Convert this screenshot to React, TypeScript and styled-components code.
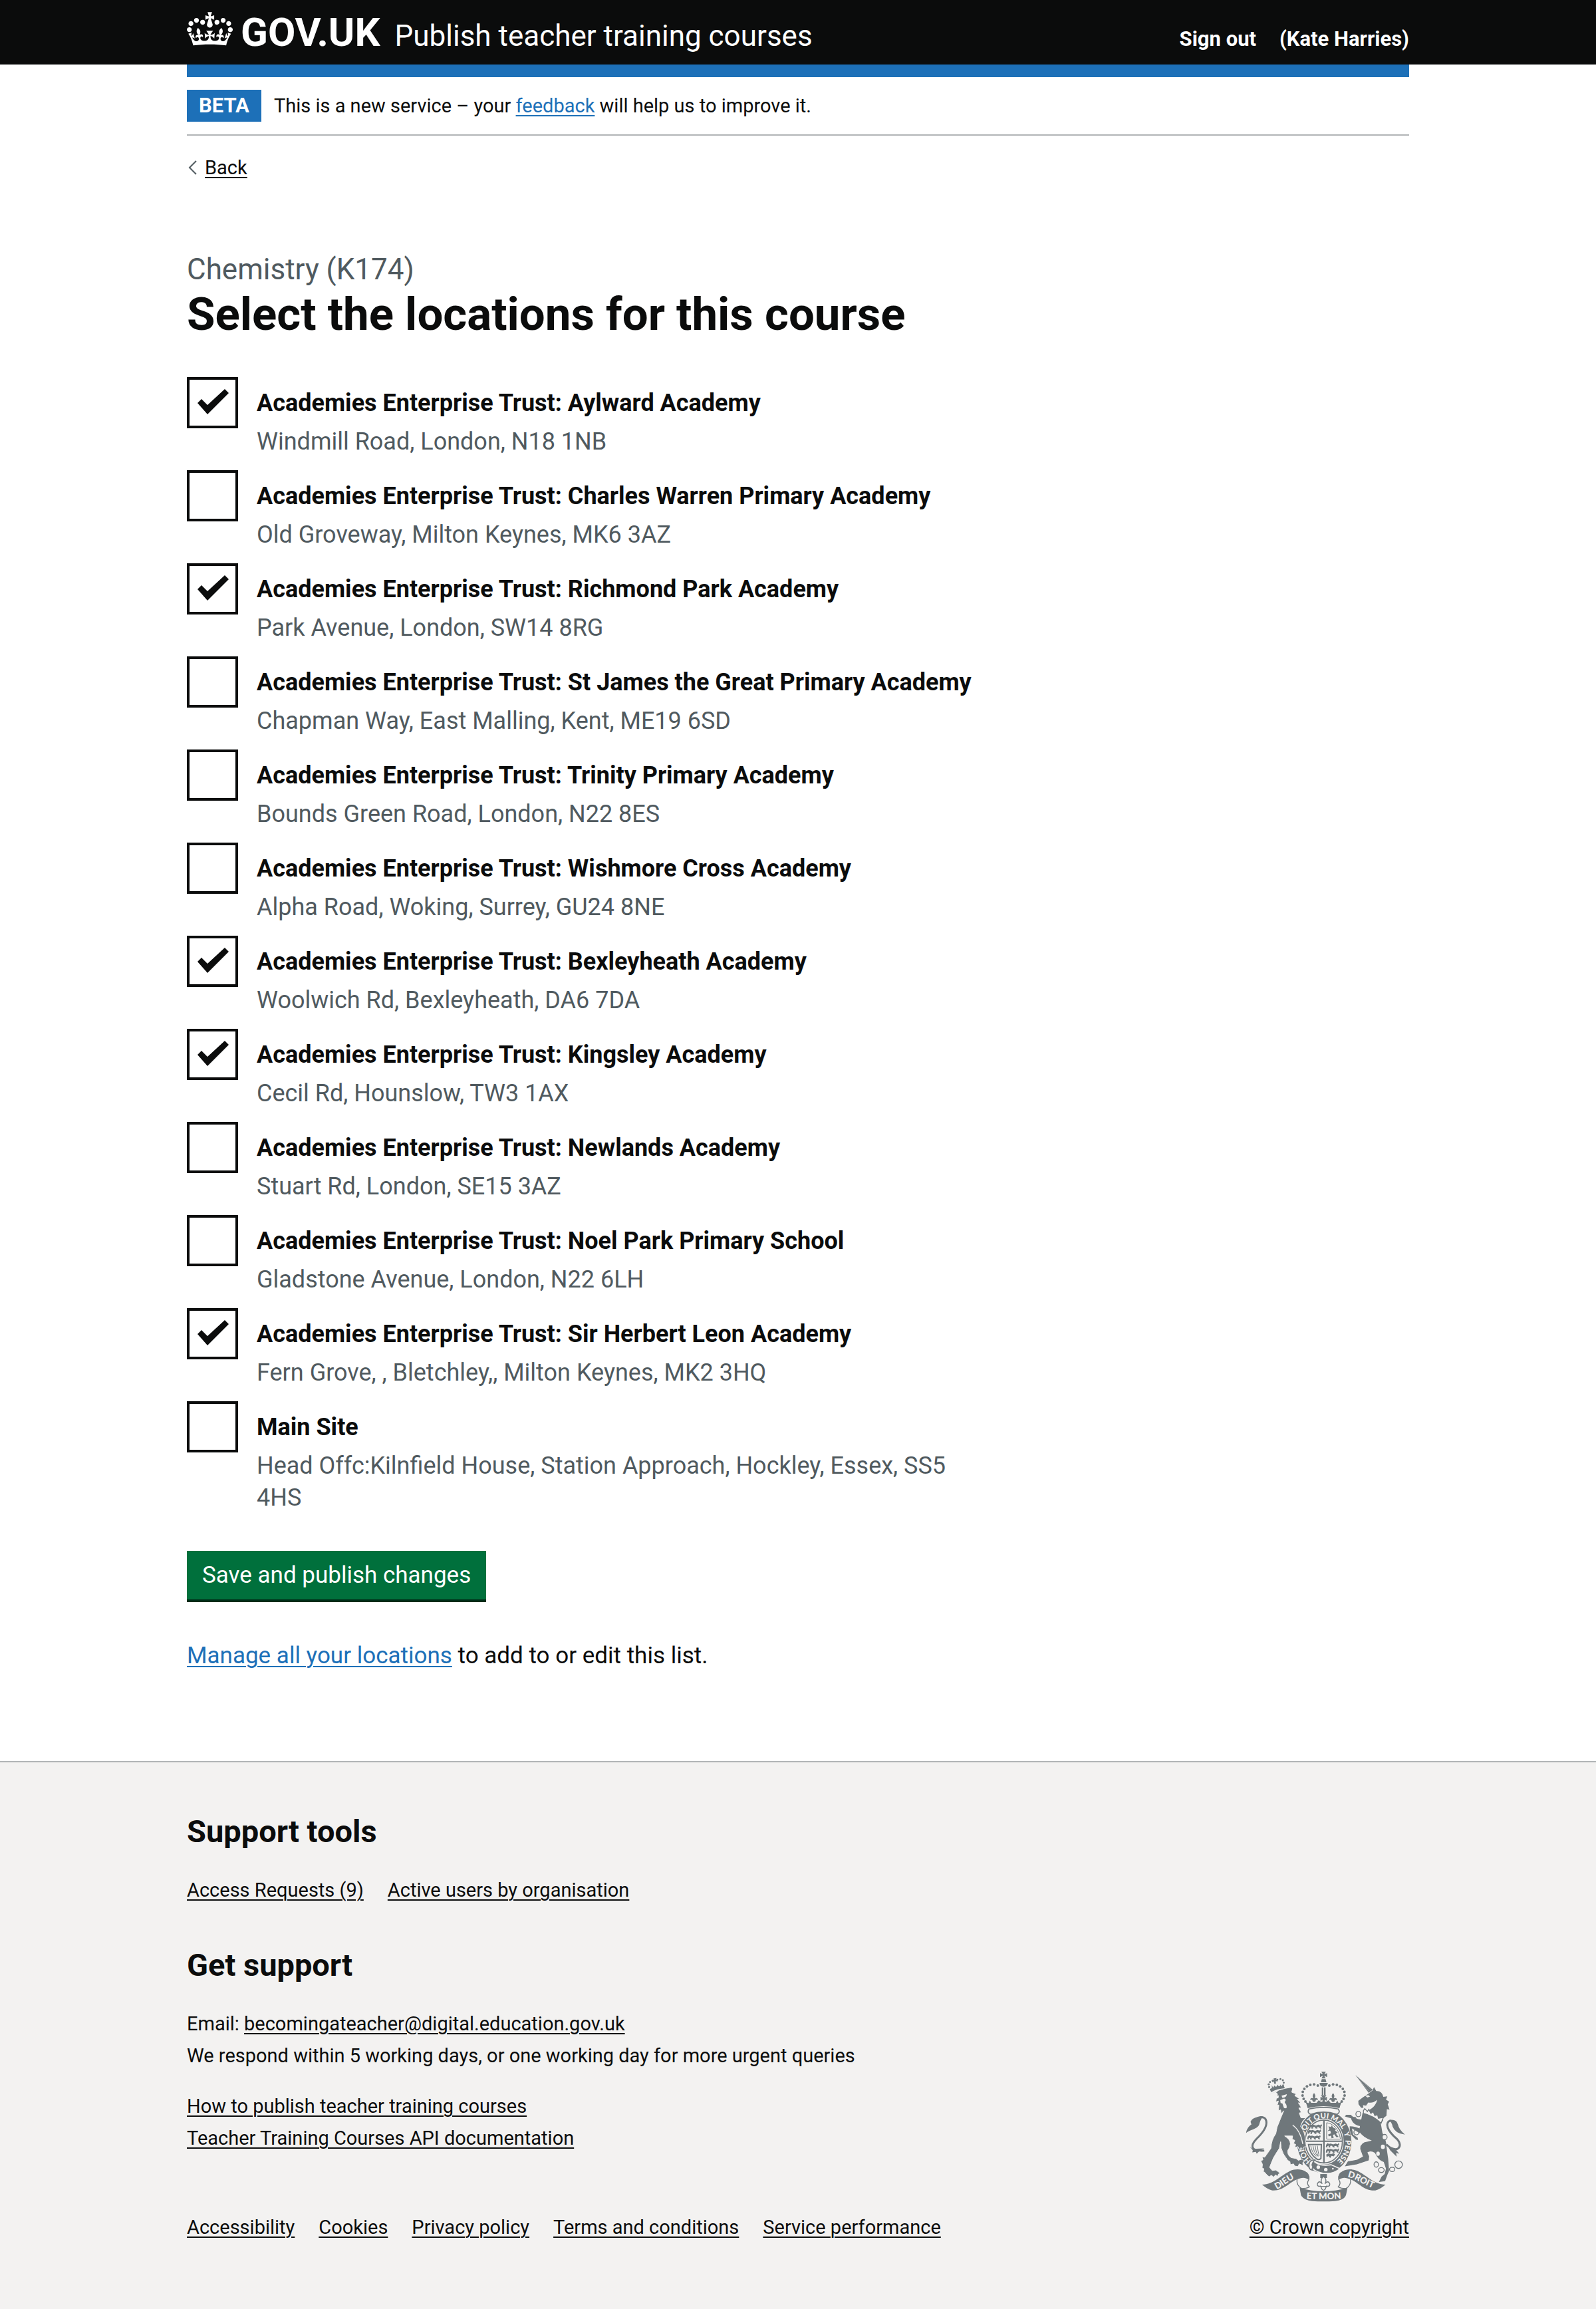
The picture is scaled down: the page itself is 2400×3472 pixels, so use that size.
import React from 'react';
import styled, { createGlobalStyle } from 'styled-components';

const colours = {
  ink: '#0b0c0c',
  blue: '#1d70b8',
  grey: '#505a5f',
  line: '#b1b4b6',
  footer: '#f3f2f1',
  green: '#00703c',
  greenShadow: '#002d18',
  crest: '#6f777b',
};

const GlobalStyle = createGlobalStyle`
  *, *::before, *::after { box-sizing: border-box; }
  body {
    margin: 0;
    background: ${colours.footer};
    color: ${colours.ink};
    font-family: Roboto, "Liberation Sans", Arial, sans-serif;
  }
`;

const Page = styled.div`
  background: #fff;
`;

const Container = styled.div`
  max-width: 1838px;
  margin: 0 auto;
`;

const HeaderBar = styled.header`
  background: ${colours.ink};
  color: #fff;
  padding: 18px 0 14px;
`;

const HeaderRow = styled(Container)`
  display: flex;
  justify-content: space-between;
  align-items: baseline;
`;

const Brand = styled.div`
  display: flex;
  align-items: baseline;
  gap: 22px;
`;

const LogoLink = styled.a`
  display: flex;
  align-items: baseline;
  gap: 12px;
  color: inherit;
  text-decoration: none;
  font-size: 60px;
  line-height: 60px;
  font-weight: 700;
`;

const Crown = styled.svg`
  width: 69px;
  height: 51px;
  margin-bottom: -3px;
`;

const ServiceLink = styled.a`
  color: inherit;
  text-decoration: none;
  font-size: 44px;
  line-height: 58px;
`;

const HeaderNav = styled.nav`
  display: flex;
  gap: 35px;
  font-size: 31px;
  line-height: 38px;
  font-weight: 700;

  a {
    color: inherit;
    text-decoration: none;
  }
`;

const BlueBar = styled.div`
  height: 19px;
  background: ${colours.blue};
`;

const PhaseBanner = styled.div`
  display: flex;
  align-items: center;
  gap: 19px;
  padding: 19px 0;
  border-bottom: 2px solid ${colours.line};
  font-size: 29px;
  line-height: 48px;
`;

const Tag = styled.strong`
  padding: 0 18px;
  background: ${colours.blue};
  color: #fff;
  font-size: 31px;
  line-height: 48px;
`;

const TextLink = styled.a<{ $tone?: 'blue' | 'ink' }>`
  color: ${({ $tone }) => ($tone === 'blue' ? colours.blue : colours.ink)};
  text-decoration: underline;
  text-decoration-thickness: 2px;
  text-underline-offset: 4px;
`;

const BackRow = styled.nav`
  display: flex;
  align-items: center;
  gap: 12px;
  margin-top: 29px;
  font-size: 29px;
  line-height: 38px;
`;

const Chevron = styled.svg`
  width: 15px;
  height: 22px;
`;

const Main = styled.main`
  max-width: 1206px;
  padding: 105px 0 134px;
`;

const Title = styled.h1`
  margin: 0 0 56px;
  font-size: 69px;
  line-height: 77px;
  font-weight: 700;
`;

const Caption = styled.span`
  display: block;
  color: ${colours.grey};
  font-size: 44px;
  line-height: 58px;
  font-weight: 400;
`;

const LocationList = styled.div`
  display: flex;
  flex-direction: column;
  gap: 19px;
  margin-bottom: 56px;
`;

const LocationRow = styled.div`
  display: flex;
  align-items: flex-start;
  gap: 28px;
`;

const Checkbox = styled.input`
  appearance: none;
  flex: none;
  width: 77px;
  height: 77px;
  margin: 0;
  border: 4px solid ${colours.ink};
  background: #fff;

  &:checked::after {
    content: '';
    display: block;
    width: 100%;
    height: 100%;
    background: ${colours.ink};
    clip-path: polygon(12px 35px, 18px 29px, 27px 38px, 53px 14px, 59px 20px, 27px 52px);
  }
`;

const LocationText = styled.div`
  display: flex;
  flex-direction: column;
  gap: 10px;
  padding-top: 15px;
  line-height: 48px;
`;

const LocationLabel = styled.label`
  font-size: 36px;
  font-weight: 700;
`;

const Hint = styled.span`
  padding-right: 29px;
  color: ${colours.grey};
  font-size: 36px;
`;

const SaveButton = styled.button`
  display: block;
  margin: 0 0 61px;
  padding: 13px 23px 12px;
  border: 0;
  background: ${colours.green};
  box-shadow: 0 4px 0 ${colours.greenShadow};
  color: #fff;
  font-family: inherit;
  font-size: 35px;
  line-height: 48px;
`;

const Paragraph = styled.p`
  margin: 0;
  font-size: 35px;
  line-height: 48px;
`;

const FooterBar = styled.footer`
  border-top: 2px solid ${colours.line};
  background: ${colours.footer};
  padding: 75px 0 100px;
  font-size: 29px;
  line-height: 48px;
`;

const FooterRow = styled(Container)`
  display: flex;
  justify-content: space-between;
  align-items: flex-end;
`;

const FooterHeading = styled.h2`
  margin: 0 0 35px;
  font-size: 47px;
  line-height: 58px;
  font-weight: 700;
`;

const FooterBlock = styled.div<{ $after?: number }>`
  margin-bottom: ${({ $after = 0 }) => $after}px;
`;

const InlineLinks = styled.ul<{ $after?: number }>`
  display: flex;
  flex-wrap: wrap;
  gap: 0 36px;
  margin: 0 0 ${({ $after = 0 }) => $after}px;
  padding: 0;
  list-style: none;
`;

const CrestLink = styled.a`
  display: flex;
  flex-direction: column;
  align-items: flex-end;
  gap: 14px;
  color: ${colours.ink};
  text-decoration: underline;
  text-decoration-thickness: 2px;
  text-underline-offset: 4px;
`;

const CrestSvg = styled.svg`
  width: 241px;
  height: 197px;
  margin-right: 5px;
`;

type Location = { name: string; address: string; selected?: boolean };

const trust = 'Academies Enterprise Trust: ';

const locations: Location[] = [
  { name: trust + 'Aylward Academy', address: 'Windmill Road, London, N18 1NB', selected: true },
  { name: trust + 'Charles Warren Primary Academy', address: 'Old Groveway, Milton Keynes, MK6 3AZ' },
  { name: trust + 'Richmond Park Academy', address: 'Park Avenue, London, SW14 8RG', selected: true },
  { name: trust + 'St James the Great Primary Academy', address: 'Chapman Way, East Malling, Kent, ME19 6SD' },
  { name: trust + 'Trinity Primary Academy', address: 'Bounds Green Road, London, N22 8ES' },
  { name: trust + 'Wishmore Cross Academy', address: 'Alpha Road, Woking, Surrey, GU24 8NE' },
  { name: trust + 'Bexleyheath Academy', address: 'Woolwich Rd, Bexleyheath, DA6 7DA', selected: true },
  { name: trust + 'Kingsley Academy', address: 'Cecil Rd, Hounslow, TW3 1AX', selected: true },
  { name: trust + 'Newlands Academy', address: 'Stuart Rd, London, SE15 3AZ' },
  { name: trust + 'Noel Park Primary School', address: 'Gladstone Avenue, London, N22 6LH' },
  { name: trust + 'Sir Herbert Leon Academy', address: 'Fern Grove, , Bletchley,, Milton Keynes, MK2 3HQ', selected: true },
  { name: 'Main Site', address: 'Head Offc:Kilnfield House, Station Approach, Hockley, Essex, SS5 4HS' },
];

const policyLinks = ['Accessibility', 'Cookies', 'Privacy policy', 'Terms and conditions', 'Service performance'];

const CrownLogo = () => (
  <Crown viewBox="0 0 132 97" aria-hidden="true">
    <path
      fill="currentColor"
      fillRule="evenodd"
      d="M25 30.2c3.5 1.5 7.7-.2 9.1-3.7 1.5-3.6-.2-7.8-3.9-9.2-3.6-1.4-7.6.3-9.1 3.9-1.4 3.5.3 7.5 3.9 9zM9 39.5c3.6 1.5 7.8-.2 9.2-3.7 1.5-3.6-.2-7.8-3.9-9.1-3.6-1.5-7.6.2-9.1 3.8-1.4 3.5.3 7.5 3.8 9zM4.4 57.2c3.5 1.5 7.7-.2 9.1-3.8 1.5-3.6-.2-7.7-3.9-9.1-3.5-1.5-7.6.3-9.1 3.8-1.4 3.5.3 7.6 3.9 9.1zm38.3-21.4c3.5 1.5 7.7-.2 9.1-3.8 1.5-3.6-.2-7.7-3.9-9.1-3.6-1.5-7.6.3-9.1 3.8-1.3 3.6.4 7.7 3.9 9.1zm64.4-5.6c-3.6 1.5-7.8-.2-9.1-3.7-1.5-3.6.2-7.8 3.8-9.2 3.6-1.4 7.7.3 9.2 3.9 1.3 3.5-.4 7.5-3.9 9zm15.9 9.3c-3.6 1.5-7.7-.2-9.1-3.7-1.5-3.6.2-7.8 3.7-9.1 3.6-1.5 7.7.2 9.2 3.8 1.5 3.5-.3 7.5-3.8 9zm4.7 17.7c-3.6 1.5-7.8-.2-9.2-3.8-1.5-3.6.2-7.7 3.9-9.1 3.6-1.5 7.7.3 9.2 3.8 1.3 3.5-.4 7.6-3.9 9.1zM89.3 35.8c-3.6 1.5-7.8-.2-9.2-3.8-1.4-3.6.2-7.7 3.9-9.1 3.6-1.5 7.7.3 9.2 3.8 1.4 3.6-.3 7.7-3.9 9.1zM69.7 17.7l8.9 4.7V9.3l-8.9 2.8c-.2-.3-.5-.6-.9-.9L72.4 0H59.6l3.5 11.2c-.3.3-.6.5-.9.9l-8.8-2.8v13.1l8.8-4.7c.3.3.6.7.9.9l-5 15.4v.1c-.2.8-.4 1.6-.4 2.4 0 4.1 3.1 7.5 7 8.1h.2c.3 0 .7.1 1 .1.4 0 .7 0 1-.1h.2c4-.6 7.1-4.1 7.1-8.1 0-.8-.1-1.7-.4-2.4V34l-5.1-15.4c.4-.2.7-.6 1-.9zM66 92.8c16.9 0 32.8 1.1 47.1 3.2 4-16.9 8.9-26.7 14-33.5l-9.6-3.4c1 4.9 1.1 7.2 0 10.2-1.5-1.4-3-4.3-4.2-8.7L108.6 76c2.8-2 5-3.2 7.5-3.3-4.4 9.4-10 11.9-13.6 11.2-4.3-.8-6.3-4.6-5.6-7.9 1-4.7 5.7-5.9 8-.5 4.3-8.7-3-11.4-7.6-8.8 7.1-7.2 7.9-13.5 2.1-21.1-8 6.1-8.1 12.3-4.5 20.8-4.7-5.4-12.1-2.5-9.5 6.2 3.4-5.2 7.9-2 7.2 3.1-.6 4.3-6.4 7.8-13.5 7.2-10.3-.9-10.9-8-11.2-13.8 2.5-.5 7.1 1.8 11 7.3L80.2 60c-4.1 4.4-8 5.3-12.3 5.4 1.4-4.4 8-11.6 8-11.6H55.5s6.4 7.2 7.9 11.6c-4.2-.1-8-1-12.3-5.4l1.4 16.4c3.9-5.5 8.5-7.7 10.9-7.3-.3 5.8-.9 12.8-11.1 13.8-7.2.6-12.9-2.9-13.5-7.2-.7-5 3.8-8.3 7.1-3.1 2.7-8.7-4.6-11.6-9.4-6.2 3.7-8.5 3.6-14.7-4.6-20.8-5.8 7.6-5 13.9 2.2 21.1-4.7-2.6-11.9.1-7.7 8.8 2.3-5.5 7.1-4.2 8.1.5.7 3.3-1.3 7.1-5.7 7.9-3.5.7-9-1.8-13.5-11.2 2.5.1 4.7 1.3 7.5 3.3l-4.7-15.4c-1.2 4.4-2.7 7.2-4.3 8.7-1.1-3-.9-5.3 0-10.2l-9.5 3.4c5 6.9 9.9 16.7 14 33.5 14.8-2.1 30.8-3.2 47.7-3.2z"
    />
  </Crown>
);

/* Beads down the left arch of the central crown; the right arch mirrors them about x = 452. */
const archBeads = [
  [426, 134], [409, 129], [392, 131], [377, 138], [365, 149], [358, 163], [357, 179], [362, 194], [370, 206],
];

const lionBeads = [
  [222, 112], [210, 118], [204, 129], [206, 141], [243, 108], [257, 105], [268, 110], [272, 121], [269, 133],
];

/* One walking lion, repeated three to a quarter on the shield. */
const WalkingLion = ({ x, y }: { x: number; y: number }) => (
  <path
    transform={`translate(${x} ${y})`}
    d="M2 8 L8 2 L15 5 L22 3 L34 7 L44 3 L54 6 L58 0 L61 9 L55 13 L59 20 L52 20 L47 14 L38 15 L40 21 L32 20 L28 13 L20 14 L20 21 L12 20 L14 12 L6 16 L8 21 L0 19 Z"
  />
);

const Crest = () => {
  const fg = colours.crest;
  const bg = colours.footer;
  return (
    <CrestSvg viewBox="100 68 723 592" fill={fg} aria-hidden="true">
      <defs>
        <path id="garter" d="M455 496 A96 107 0 0 1 455 282 A96 107 0 0 1 455 496" />
        <path id="dieu" d="M240 604 C276 588 296 560 344 546" />
        <path id="droit" d="M560 548 C600 554 630 584 690 604" />
        <path id="etmon" d="M360 645 Q452 652 546 644" />
      </defs>

      {/* Garter and shield */}
      <ellipse cx="455" cy="388" rx="123" ry="142" />
      <g fill={bg} fontFamily="Lato, Roboto, sans-serif" fontWeight="900" fontSize="34" textAnchor="middle">
        <text><textPath href="#garter" startOffset="17%">HONI</textPath></text>
        <text><textPath href="#garter" startOffset="36%">SOIT</textPath></text>
        <text><textPath href="#garter" startOffset="48%">QUI</textPath></text>
        <text><textPath href="#garter" startOffset="60%">MAL</textPath></text>
        <text><textPath href="#garter" startOffset="70%">Y</textPath></text>
        <text><textPath href="#garter" startOffset="82%">PENSE</textPath></text>
      </g>
      <ellipse cx="453" cy="387" rx="90" ry="104" fill={bg} />
      <ellipse cx="453" cy="387" rx="84" ry="97" fill="none" stroke={fg} strokeWidth="5" />
      <path d="M450 290h7v194h-7zM369 383h168v6H369z" />
      <WalkingLion x={384} y={308} />
      <WalkingLion x={380} y={332} />
      <WalkingLion x={378} y={357} />
      <g transform="translate(84 84)">
        <WalkingLion x={378} y={309} />
        <WalkingLion x={378} y={333} />
        <path d="M380 362l10-5 12 3 12-4 6 6-6 8-10-2-6 10-8-9-8 4z" />
      </g>
      <path d="M466 302c30 4 56 30 62 74h-62z" fill="none" stroke={fg} strokeWidth="3" />
      <path d="M474 318l12 4 2-8 8 10 12 6-4 8 12 8-8 6 12 14-10 2-10-14-6 4 4 12-10 2-2-12-10 4-4-8 14-6-4-12-12 2 8-8z" />
      <path d="M384 401h58l-2 62q-10 10-20 2-30-20-36-64z" fill="none" stroke={fg} strokeWidth="6" />
      <path d="M394 406q4 28 24 48M404 406q2 26 20 48M414 406q2 26 14 48M424 406q2 24 8 46" fill="none" stroke={fg} strokeWidth="3" />

      {/* Buckle and strap end */}
      <path d="M386 490q6-26 26-22-8 8 4 14 26 18 70 10l40 18q-30 26-78 20-40-6-62-40z" stroke={bg} strokeWidth="5" />
      <path d="M412 470q-24-2-26 22t16 24q-4-10 4-14-14-8 6-32z" fill={bg} stroke={fg} strokeWidth="5" />
      <circle cx="428" cy="503" r="8" fill={bg} />
      <circle cx="462" cy="514" r="8" fill={bg} />
      <circle cx="494" cy="510" r="4" fill={bg} />

      {/* Central crown */}
      <path d="M378 228q74-24 148 0l-6 24q-68-16-136 0z" fill={bg} />
      <path d="M442 72h20l-7 12 13-6v18l-13-6 6 12h-18l6-12-13 6v-18l13 6z" />
      <path d="M444 105h17l4 14h-25z" />
      <path d="M434 122h37q0 17-19 17t-18-17z" />
      <path d="M444 142h7v36h-7zM454 142h7v36h-7z" />
      {archBeads.map(([x, y]) => (
        <React.Fragment key={x}>
          <circle cx={x} cy={y} r="6" />
          <circle cx={904 - x} cy={y} r="6" />
        </React.Fragment>
      ))}
      <path d="M440 178h25l-8 11 10-4v18l-10-5 2 12h-13l2-12-10 5v-18l10 4z" />
      <path d="M409 168q10 12 3 24 14-6 14 8l-8-2-4 10h-10l-4-10-8 2q0-14 14-8-8-12 3-24zM495 168q10 12 3 24 14-6 14 8l-8-2-4 10h-10l-4-10-8 2q0-14 14-8-8-12 3-24z" />
      <path d="M370 208l14 6 6-12 6 10h24l10-12 10 8h24l10-8 10 12h24l6-10 6 12 14-6q-6 10-10 28-72-18-144 0-4-18-10-28z" />
      <path d="M386 240q-10 18 8 24 58-20 118 0 18-8 6-24-66-14-132 0z" fill={bg} stroke={fg} strokeWidth="5" />

      {/* Lion */}
      <path
        stroke={bg}
        strokeWidth="3"
        d="M196 181l18-9q34-22 92-30l6 6-4 16 20 8-6 8 22 14-10 2 16 18-12-2 14 22-12 2 12 20-10 2 8 22 22 0q-18 14-24 38 20 26 22 62l4 30-12 2-2 12-10-10-8 10-6-14-14 4 4-14-10-4 6-14-12-6 2-14-36 0q26 16 26 36-4 20-12 30-2 22 16 32l22 4 10 8 18-6 8 12-6 4 2 14-18-8-6 12-14-2-6-10-14 4-2-14-10-6q-24-30-30-56l-2-28-6 30q-30 40-44 86l12 14 16-2 12 8 8 8-8 2-2 10-12-6-6 10-12-8-10 6-10-8-10-12-6-2 2-14-8-4 2-16-8-16 10-4-4-14 12 2 10-14 18-26q2-40 22-66l6-30q16-40 30-74l-12 14-2-18-10 4 2-26-8 2 6-20-12 4 4-22 4-14-8-6 8-6z"
      />
      <path d="M226 180l24-1-2 12q-14 4-22-11zM262 180l24-7q0 14-20 17zM256 200l18-7 8 6-6 10 8 12 2 12q-8 8-14 0l-6-18-8-2z" fill={bg} />
      <path d="M312 312q36 26 46 86" fill="none" stroke={bg} strokeWidth="4" />
      <path d="M209 150q32-16 64-13l4 9q-34 2-62 18z" />
      {lionBeads.map(([x, y]) => (
        <circle key={x} cx={x} cy={y} r="4.5" />
      ))}
      <path d="M226 102l14-2-4 8 8 0 0 8-8-2 1 12-8 0-2-10-7 2-1-8 8-1zM218 132l6 12 6-10 8 8 6-12 7 9 8-10 2 14-42 9z" />
      <path d="M184 428c-62 4-64-22-36-52 36-34 54-66 42-90-10-14-32-12-50 4" fill="none" stroke={fg} strokeWidth="9" />
      <path d="M178 274c-30 2-48 6-56 24l4 12c-12 8-22 22-24 38 18-14 46-16 58-34 4-10 4-22 18-40zM118 410l14 10 52-2-22 12-12 12-4-8-16 2 2-10z" />

      {/* Unicorn */}
      <path d="M596 87l78 66-18 14z" />
      <path d="M604 98l54 62M612 100l54 52" stroke={bg} strokeWidth="1" />
      <path d="M680 141l10 18q26-2 32 26l18-2-6 14 14 10-6 12 8 24-12-2-2 30-14 10-2 16q-26-32-68-36l-10-10q44-14 52-52-18 16-40 12l-10 14-14-2 2 12-10 0-12-16-1-16q20-16 42-30l22-16z" />
      <path d="M640 180l14-2 8 6-12 4z" fill={bg} />
      <path d="M632 248l6-10 12 14 6-10 10 18 10-8 8 18 12-4 4 16 22-4-10 26q-36-34-80-44z" fill={bg} stroke={fg} strokeWidth="4" />
      <path d="M628 258q46 10 82 44l8 46q18 30 18 62l8 56 4 54-8 18-10 28-28 4 12-24 14-12 6-24-10-30q-26-10-40-42-20-12-34-2l8 18-2 18-54 18-54 9 14-22 42-8 26-14-12-34q-2-30 34-34l18-4q-40-14-58-42z" />
      <path d="M620 318q-36-4-44-36l-28-8 6-8 22 0q14 20 48 22zM616 350l-36-22 6 28 20 14 2 10-10-2-14-14q-14-10-14-46 20 0 52 12z" />
      <path d="M736 400c46 46 80 10 48-24-46-38-58-76-28-84" fill="none" stroke={fg} strokeWidth="9" />
      <path d="M748 290q34-6 40 20 4 22 32 46-44-4-56-36-2-18-16-30zM742 408l12 20 28 28-2-18 14 4-20-24z" />
      <g fill="none" stroke={fg} strokeWidth="4">
        <ellipse cx="609" cy="263" rx="11" ry="12" />
        <ellipse cx="591" cy="287" rx="8" ry="10" />
        <ellipse cx="600" cy="345" rx="11" ry="12" />
        <ellipse cx="690" cy="491" rx="10" ry="12" />
        <ellipse cx="713" cy="516" rx="13" ry="11" />
        <circle cx="791" cy="492" r="17" />
        <ellipse cx="762" cy="513" rx="12" ry="10" />
        <ellipse cx="728" cy="367" rx="11" ry="12" fill={bg} />
      </g>
      <ellipse cx="720" cy="411" rx="9" ry="10" fill={bg} />
      <ellipse cx="698" cy="442" rx="8" ry="10" fill={bg} />

      {/* Fleur-de-lis pendant */}
      <path d="M437 534h30v18h-30z" />
      <path d="M452 544q18 16 6 34 14-18 22 0 2 14-14 10-6 12-6 14l-8 6-8-6q0-2-6-14-16 4-14-10 8-18 22 0-12-18 6-34zM434 590h36" fill={bg} stroke={fg} strokeWidth="4" />

      {/* Motto ribbon */}
      <path d="M332 556q-4 30 22 44 20 0 34-8-16-16-2-34 4-26-22-36z" fill={bg} stroke={fg} strokeWidth="4" />
      <path d="M574 556q4 30-22 44-20 0-34-8 16-16 2-34-4-26 22-36z" fill={bg} stroke={fg} strokeWidth="4" />
      <path d="M174 582c56-4 76-36 126-62 34-14 78-8 86 26l-2 14c-18-14-34-8-52-2-36 14-62 54-112 50-18-4-32-14-46-26z" />
      <path d="M732 582c-56-4-76-36-126-62-34-14-78-8-86 26l2 14c18-14 34-8 52-2 36 14 62 54 112 50 18-4 32-14 46-26z" />
      <path d="M344 596q108 32 216 0l-6 30q-6 26-50 30-52 4-104 0-38-4-50-26z" />
      <g fill={bg} fontFamily="Lato, Roboto, sans-serif" fontWeight="900" fontSize="40">
        <text><textPath href="#dieu">DIEU</textPath></text>
        <text><textPath href="#droit">DROIT</textPath></text>
        <text><textPath href="#etmon" startOffset="50%" textAnchor="middle">ET MON</textPath></text>
      </g>
    </CrestSvg>
  );
};

export default function App() {
  return (
    <Page>
      <GlobalStyle />
      <HeaderBar>
        <HeaderRow>
          <Brand>
            <LogoLink href="#home">
              <CrownLogo />
              <span>GOV.UK</span>
            </LogoLink>
            <ServiceLink href="#service">Publish teacher training courses</ServiceLink>
          </Brand>
          <HeaderNav aria-label="Account">
            <a href="#sign-out">Sign out</a>
            <a href="#profile">(Kate Harries)</a>
          </HeaderNav>
        </HeaderRow>
      </HeaderBar>

      <Container>
        <BlueBar />
        <PhaseBanner>
          <Tag>BETA</Tag>
          <span>
            This is a new service – your <TextLink href="#feedback" $tone="blue">feedback</TextLink> will help us to improve it.
          </span>
        </PhaseBanner>
        <BackRow aria-label="Back">
          <Chevron viewBox="0 0 15 22" aria-hidden="true">
            <path d="M14 1L4 11l10 10" fill="none" stroke={colours.grey} strokeWidth="2" />
          </Chevron>
          <TextLink href="#back">Back</TextLink>
        </BackRow>

        <Main>
          <Title>
            <Caption>Chemistry (K174)</Caption>
            Select the locations for this course
          </Title>
          <form onSubmit={(event) => event.preventDefault()}>
            <LocationList>
              {locations.map(({ name, address, selected }, index) => (
                <LocationRow key={name}>
                  <Checkbox
                    type="checkbox"
                    id={`location-${index}`}
                    aria-describedby={`location-${index}-hint`}
                    defaultChecked={selected}
                  />
                  <LocationText>
                    <LocationLabel htmlFor={`location-${index}`}>{name}</LocationLabel>
                    <Hint id={`location-${index}-hint`}>{address}</Hint>
                  </LocationText>
                </LocationRow>
              ))}
            </LocationList>
            <SaveButton type="submit">Save and publish changes</SaveButton>
          </form>
          <Paragraph>
            <TextLink href="#locations" $tone="blue">Manage all your locations</TextLink> to add to or edit this list.
          </Paragraph>
        </Main>
      </Container>

      <FooterBar>
        <FooterRow>
          <div>
            <FooterHeading>Support tools</FooterHeading>
            <InlineLinks $after={60}>
              <li><TextLink href="#access-requests">Access Requests (9)</TextLink></li>
              <li><TextLink href="#active-users">Active users by organisation</TextLink></li>
            </InlineLinks>
            <FooterHeading>Get support</FooterHeading>
            <FooterBlock $after={28}>
              <div>
                Email: <TextLink href="#email">becomingateacher@digital.education.gov.uk</TextLink>
              </div>
              <div>We respond within 5 working days, or one working day for more urgent queries</div>
            </FooterBlock>
            <FooterBlock $after={86}>
              <div><TextLink href="#guidance">How to publish teacher training courses</TextLink></div>
              <div><TextLink href="#api">Teacher Training Courses API documentation</TextLink></div>
            </FooterBlock>
            <InlineLinks>
              {policyLinks.map((label) => (
                <li key={label}><TextLink href="#policy">{label}</TextLink></li>
              ))}
            </InlineLinks>
          </div>
          <CrestLink href="#copyright">
            <Crest />
            <span>© Crown copyright</span>
          </CrestLink>
        </FooterRow>
      </FooterBar>
    </Page>
  );
}
